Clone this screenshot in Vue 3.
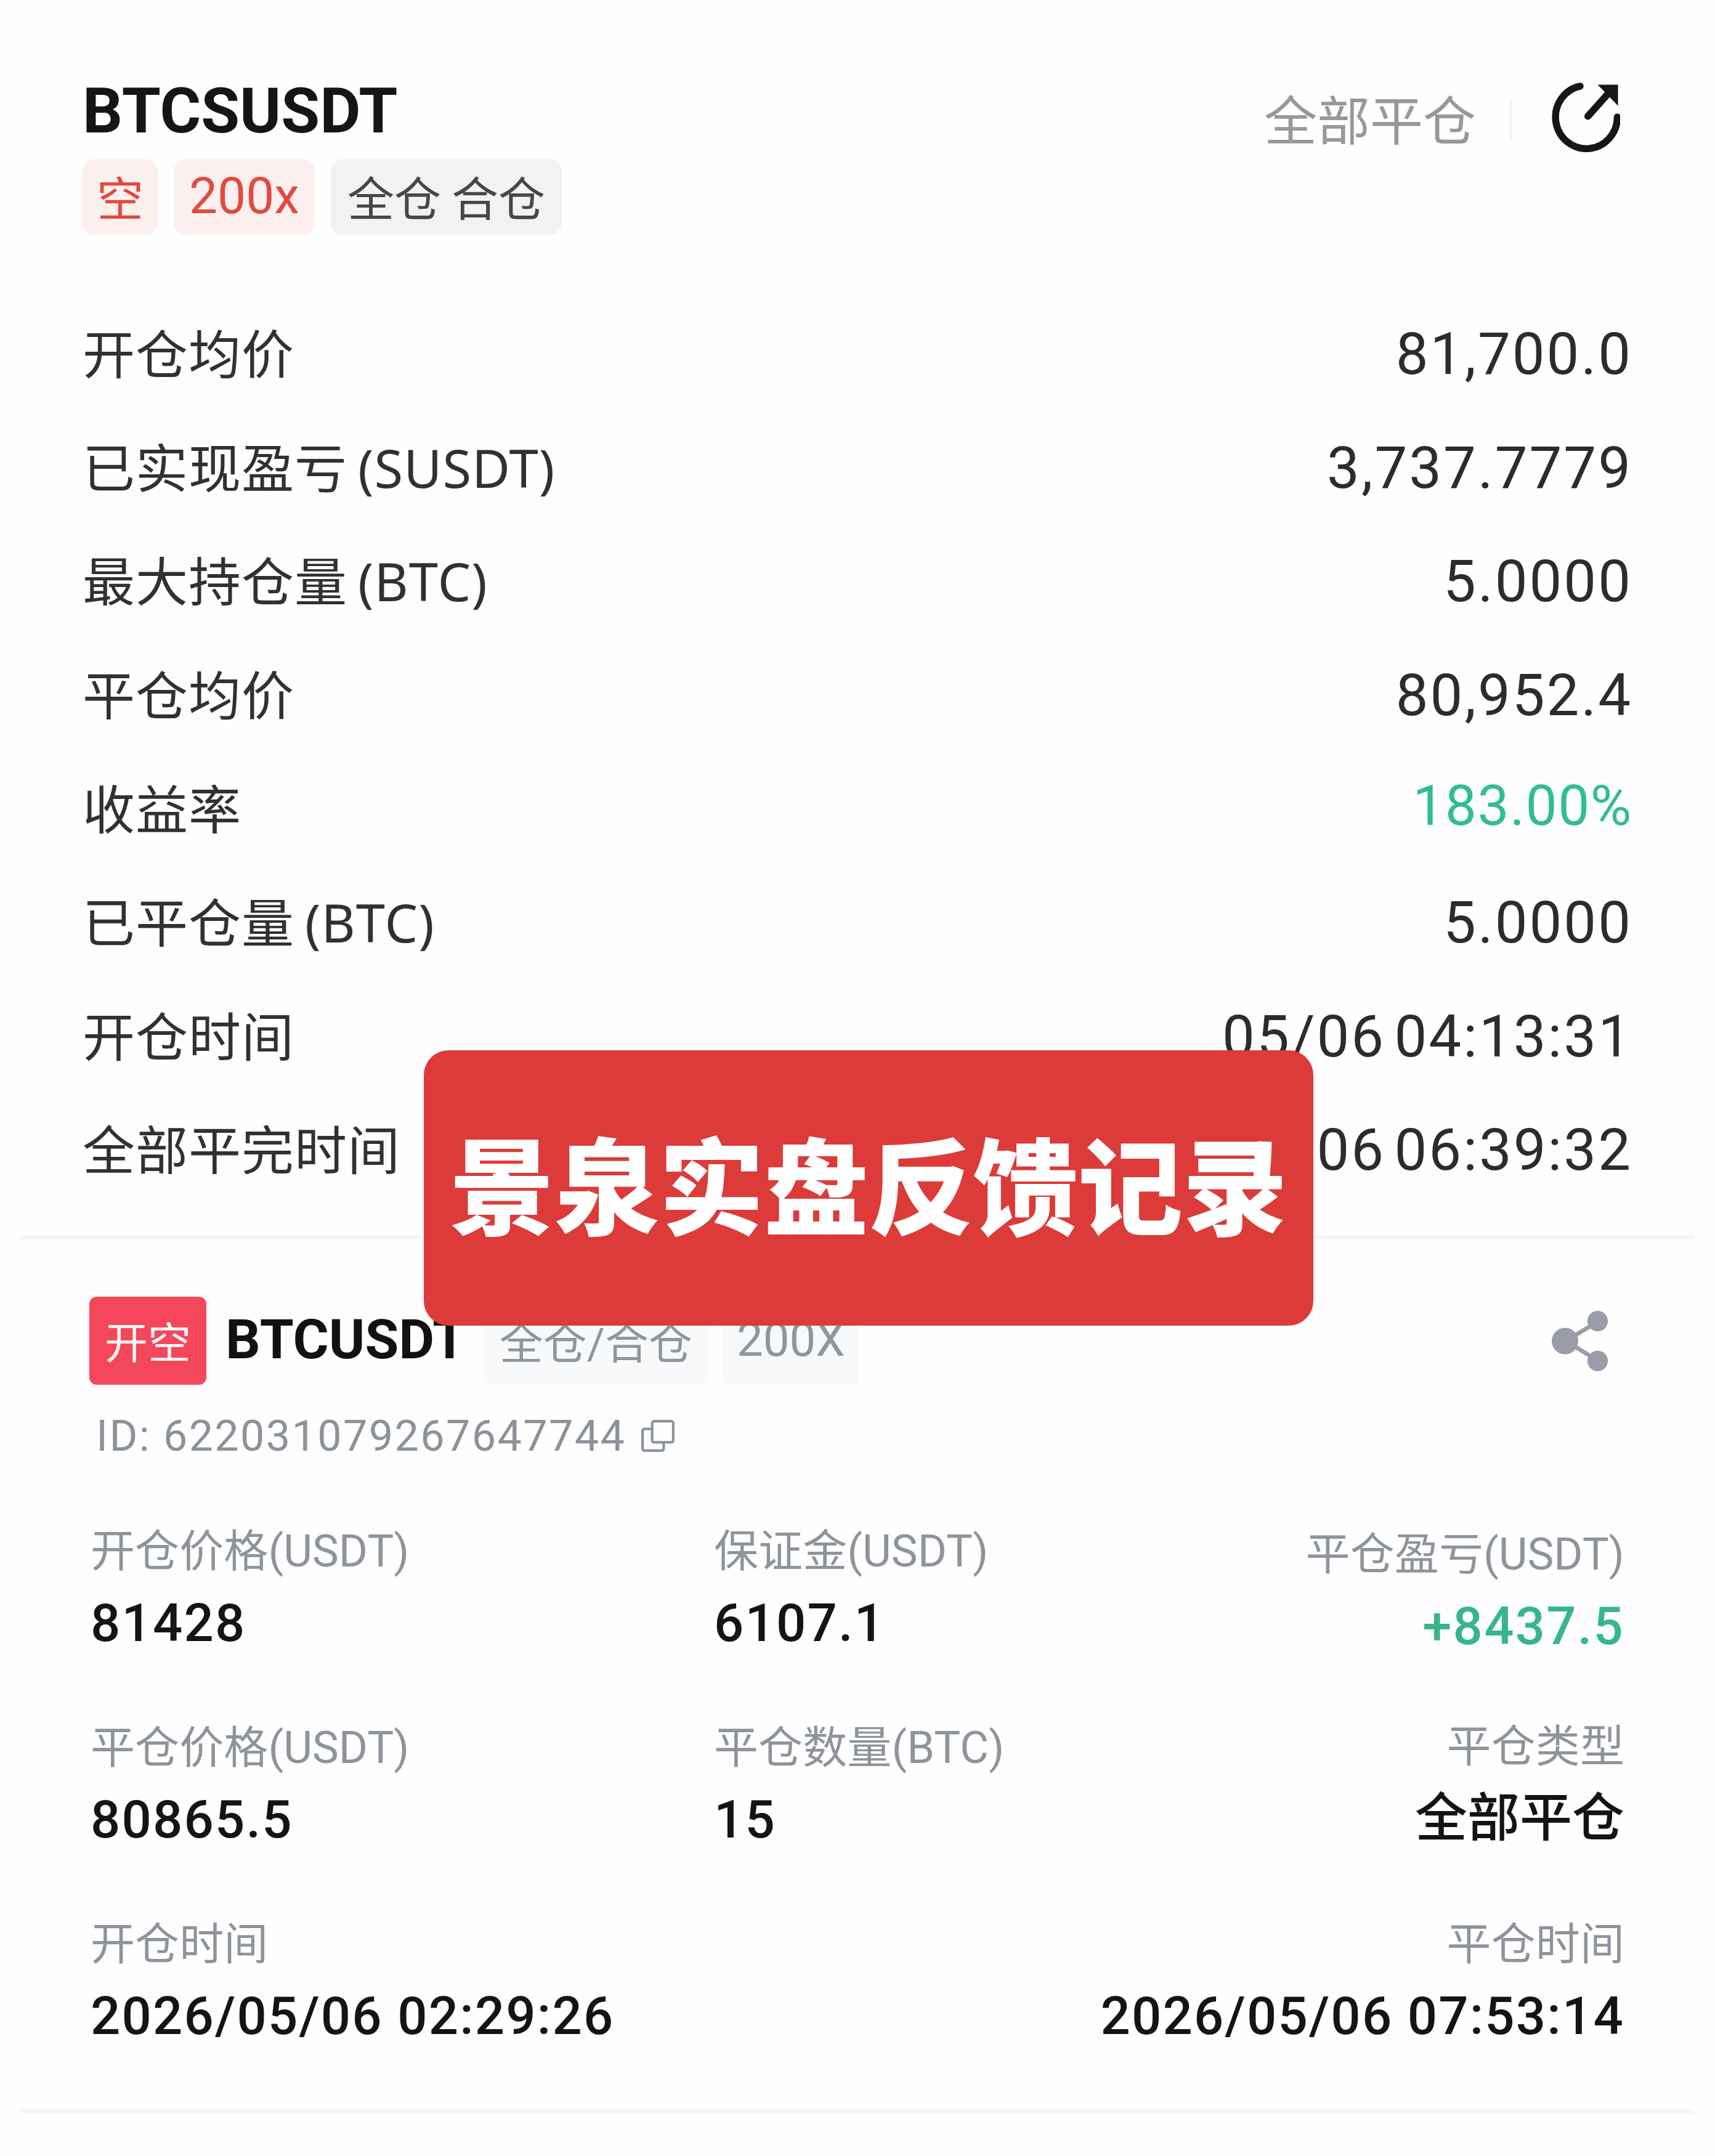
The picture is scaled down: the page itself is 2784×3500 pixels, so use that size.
<script setup>
const rows = [
  { label: '开仓均价', value: '81,700.0' },
  { label: '已实现盈亏 (SUSDT)', value: '3,737.7779' },
  { label: '最大持仓量 (BTC)', value: '5.0000' },
  { label: '平仓均价', value: '80,952.4' },
  { label: '收益率', value: '183.00%', green: true },
  { label: '已平仓量 (BTC)', value: '5.0000' },
  { label: '开仓时间', value: '05/06 04:13:31', time: true },
  { label: '全部平完时间', value: '05/06 06:39:32', time: true },
]
const cells = [
  { label: '开仓价格(USDT)', value: '81428' },
  { label: '保证金(USDT)', value: '6107.1' },
  { label: '平仓盈亏(USDT)', value: '+8437.5', right: true, green: true, low: true },
  { label: '平仓价格(USDT)', value: '80865.5' },
  { label: '平仓数量(BTC)', value: '15' },
  { label: '平仓类型', value: '全部平仓', right: true, cjk: true, high: true },
  { label: '开仓时间', value: '2026/05/06 02:29:26' },
  { label: '', value: '' },
  { label: '平仓时间', value: '2026/05/06 07:53:14', right: true },
]
</script>

<template>
  <div class="page">
    <section class="summary">
      <header class="head">
        <div class="head-left">
          <h1 class="title">BTCSUSDT</h1>
          <div class="tags">
            <span class="tag red">空</span>
            <span class="tag red num">200x</span>
            <span class="tag gray">全仓 合仓</span>
          </div>
        </div>
        <div class="head-right">
          <span class="close-all">全部平仓</span>
          <span class="vline"></span>
          <svg class="refresh" viewBox="0 0 100 100" fill="none" stroke="#161616" stroke-width="10" stroke-linecap="round">
            <path d="M43 6 A44 45 0 1 0 96 50" />
            <path d="M54 49 L88 11" />
            <path d="M68 4 H97 V34 Z" fill="#161616" stroke="none" />
          </svg>
        </div>
      </header>
      <div class="rows">
        <div v-for="r in rows" :key="r.label" class="row">
          <span class="row-label">{{ r.label }}</span>
          <span class="row-value" :class="{ green: r.green, time: r.time }">{{ r.value }}</span>
        </div>
      </div>
    </section>

    <section class="order">
      <div class="order-head">
        <span class="side">开空</span>
        <span class="symbol">BTCUSDT</span>
        <span class="chip cross">全仓/合仓</span>
        <span class="chip lev">200X</span>
        <svg class="share" viewBox="0 0 100 100" fill="#9a9ca8" stroke="#9a9ca8" stroke-width="7">
          <path d="M25 50 L78 18 M25 50 L78 82" />
          <circle cx="24" cy="50" r="22" stroke="none" />
          <circle cx="78" cy="17" r="17" stroke="none" />
          <circle cx="78" cy="83" r="17" stroke="none" />
        </svg>
      </div>
      <div class="id-line">
        <span>ID: 622031079267647744</span>
        <svg class="copy" viewBox="0 0 54 54" fill="none" stroke="#8b929a" stroke-width="4">
          <rect x="18" y="4" width="33" height="33" rx="3" />
          <path d="M18 16 H6 a3 3 0 0 0 -3 3 V47 a3 3 0 0 0 3 3 H33 a3 3 0 0 0 3 -3 V37" />
        </svg>
      </div>
      <div class="grid">
        <div v-for="(c, i) in cells" :key="i" class="cell" :class="{ right: c.right, low: c.low, high: c.high }">
          <div class="cell-label">{{ c.label }}</div>
          <div class="cell-value" :class="{ green2: c.green, cjk: c.cjk }">{{ c.value }}</div>
        </div>
      </div>
    </section>

    <div class="banner">景泉实盘反馈记录</div>
  </div>
</template>

<style scoped>
.page {
  position: relative;
  width: 2784px;
  height: 3500px;
  background: #fefefe;
  font-family: Roboto, "Noto Sans CJK SC", sans-serif;
  overflow: hidden;
}
.summary {
  height: 2012px;
  border-bottom: 6px solid #f5f5f5;
  margin: 0 34px;
  padding-left: 100px;
  padding-right: 100px;
  box-sizing: border-box;
}
.head {
  display: flex;
  justify-content: space-between;
  height: 484px;
  padding-top: 122px;
  box-sizing: border-box;
}
.title {
  margin: 0;
  font-size: 102px;
  line-height: 116px;
  font-weight: 700;
  color: #151515;
}
.tags {
  display: flex;
  gap: 26px;
  margin-top: 20px;
}
.tag {
  height: 123px;
  border-radius: 20px;
  display: flex;
  align-items: center;
  font-size: 76px;
  font-family: "Noto Sans CJK SC", sans-serif;
  padding: 0 23px 3px;
  box-sizing: border-box;
}
.tag.red {
  background: #fbf0ef;
  color: #e4493c;
}
.tag.num {
  font-family: Roboto, sans-serif;
  font-size: 82px;
  padding: 0 25px 3px;
}
.tag.gray {
  background: #f2f2f3;
  color: #46474b;
  padding: 0 27px 3px;
}
.head-right {
  display: flex;
  align-items: center;
  height: 112px;
  padding-top: 12px;
  padding-right: 20px;
}
.close-all {
  font-family: "Noto Sans CJK SC", sans-serif;
  font-size: 86px;
  color: #97989a;
}
.vline {
  width: 3px;
  height: 66px;
  background: #f3f3f3;
  margin: 10px 62px 0 55px;
}
.refresh {
  width: 114px;
  height: 114px;
}
.row {
  height: 184.6px;
  display: flex;
  justify-content: space-between;
  align-items: center;
}
.row-label {
  font-size: 85px;
  letter-spacing: 1px;
  word-spacing: -6px;
  font-family: "Noto Sans", "Noto Sans CJK SC", sans-serif;
  color: #303134;
  margin-bottom: 12px;
}
.row-value {
  font-size: 94px;
  letter-spacing: 3px;
  color: #2b2c2f;
  white-space: nowrap;
  margin-bottom: 2px;
}
.row-value.time {
  word-spacing: -12px;
}
.green {
  color: #2fbf8c;
  font-size: 91px;
  letter-spacing: 1.5px;
  margin-bottom: 14px;
}
.order {
  padding: 93px 113px 0 111px;
  height: 1419px;
  box-sizing: border-box;
  margin: 0 34px;
  border-bottom: 6px solid #f5f5f5;
}
.order-head {
  display: flex;
  align-items: center;
  height: 143px;
  position: relative;
}
.side {
  width: 190px;
  height: 143px;
  border-radius: 12px;
  background: #f5475b;
  color: #fff6f6;
  font-family: "Noto Sans CJK SC", sans-serif;
  font-size: 70px;
  padding-bottom: 3px;
  box-sizing: border-box;
  display: flex;
  align-items: center;
  justify-content: center;
}
.symbol {
  margin-left: 31px;
  font-size: 89px;
  font-weight: 700;
  color: #111;
  margin-bottom: 4px;
}
.chip {
  height: 143px;
  display: flex;
  align-items: center;
  justify-content: center;
  background: #f8f9fa;
  color: #8f969e;
  border-radius: 10px;
  font-size: 71px;
  font-family: Roboto, "Noto Sans CJK SC", sans-serif;
  box-sizing: border-box;
  padding-bottom: 3px;
  white-space: nowrap;
}
.cross {
  margin-left: 28px;
  width: 364px;
}
.lev {
  margin-left: 24px;
  width: 221px;
  font-size: 76px;
}
.share {
  width: 98px;
  height: 98px;
  margin-left: auto;
  margin-right: 22px;
}
.id-line {
  display: flex;
  align-items: center;
  gap: 24px;
  height: 80px;
  margin-top: 43px;
  padding-left: 11px;
  font-size: 70px;
  letter-spacing: 2.4px;
  color: #8b929a;
  white-space: nowrap;
}
.copy {
  width: 56px;
  height: 56px;
}
.grid {
  display: grid;
  grid-template-columns: 1012px 1fr auto;
  grid-auto-rows: 319px;
  margin-top: 100px;
  padding-left: 2px;
}
.cell.right {
  text-align: right;
}
.cell.low {
  padding-top: 5px;
}
.cell.high {
  margin-top: -2px;
}
.cell-label {
  font-size: 72px;
  letter-spacing: 0.1px;
  line-height: 96px;
  color: #8e949b;
  white-space: nowrap;
  min-height: 96px;
}
.cell-value {
  font-size: 85px;
  line-height: 120px;
  margin-top: 8px;
  letter-spacing: 2.2px;
  color: #141414;
  font-weight: 500;
  white-space: nowrap;
  min-height: 120px;
}
.green2 {
  color: #37b68c;
}
.cell-value.cjk {
  font-family: "Noto Sans CJK SC", sans-serif;
  letter-spacing: 0;
  margin-top: 0;
}
.banner {
  position: absolute;
  left: 688px;
  top: 1705px;
  width: 1444px;
  height: 447px;
  background: #dc3b39;
  border-radius: 40px;
  display: flex;
  align-items: center;
  justify-content: center;
  padding-bottom: 22px;
  box-sizing: border-box;
  color: #fff;
  font-family: "Noto Sans CJK SC", sans-serif;
  font-weight: 900;
  font-size: 170px;
  white-space: nowrap;
}
</style>
